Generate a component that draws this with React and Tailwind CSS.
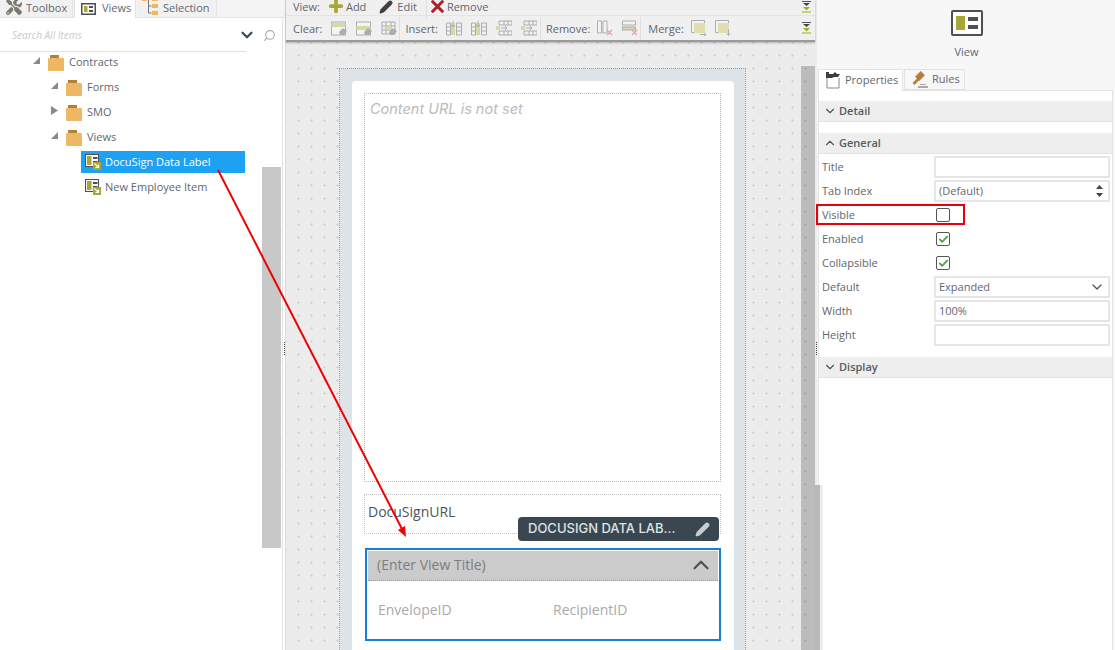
import { ChevronDown, ChevronUp, Search, Pencil, Check, X, Plus } from 'lucide-react';
import { FaTools } from 'react-icons/fa';

const Folder = () => (
  <svg width="16" height="16" viewBox="0 0 16 16" className="shrink-0">
    <rect x="2" y="0" width="9" height="3" fill="#b77f33" />
    <rect x="0" y="3" width="16" height="13" rx="1" fill="#edb766" />
  </svg>
);

const ViewIcon = ({ invert }) => (
  <svg width="16" height="16" viewBox="0 0 16 16" className="shrink-0">
    <rect x="0.5" y="0.5" width="13" height="12" fill={invert ? '#fff' : '#f4f4f4'} stroke="#4b5154" />
    <rect x="2" y="2" width="4.5" height="9" fill="#a9a635" />
    <rect x="8" y="3" width="4.5" height="2" fill="#4b5154" />
    <rect x="8" y="7" width="4.5" height="2" fill="#4b5154" />
    <rect x="8" y="8" width="8" height="8" fill="#a9a635" />
    <path d="M9.5 9.5l4 4M13.5 10.5v3h-3" stroke="#fff" strokeWidth="1.2" fill="none" />
  </svg>
);

const TreeRow = ({ pad, arrow, children }) => (
  <div className="flex items-center h-[25px]" style={{ paddingLeft: pad }}>
    <span className="w-[15px] shrink-0 flex">{arrow}</span>
    <Folder />
    <span className="ml-[5px] text-[11px] text-[#5f6670]">{children}</span>
  </div>
);

const Open = () => (
  <svg width="7" height="7" viewBox="0 0 7 7" className="-mt-[5px]"><path d="M7 0v7H0z" fill="#8a8a8a" /></svg>
);
const Closed = () => (
  <svg width="7" height="9" viewBox="0 0 7 9" className="-mt-[4px]"><path d="M0 0l7 4.5L0 9z" fill="#8a8a8a" /></svg>
);

// faded toolbar glyphs
const ToolIcon = ({ kind }) => {
  const g = '#a9aeb0';
  const y = '#d9d7a6';
  return (
    <svg width="16" height="16" viewBox="0 0 16 16" className="shrink-0">
      {kind === 'clear' && (
        <>
          <rect x="0.5" y="2" width="14" height="13" fill="#f4f4f4" stroke={g} />
          <rect x="0.5" y="3" width="14" height="4" fill={y} />
          <path d="M8 12l4-4 4 3-3 4H9z" fill={g} />
        </>
      )}
      {kind === 'clear2' && (
        <>
          <rect x="0.5" y="2" width="14" height="13" fill="#f4f4f4" stroke={g} />
          <rect x="0.5" y="6" width="14" height="4" fill={y} />
          <path d="M8 12l4-4 4 3-3 4H9z" fill={g} />
        </>
      )}
      {kind === 'clear3' && (
        <>
          <path d="M1 2h13v12H1zM1 6h13M1 10h13M5 2v12M10 2v12" fill="none" stroke={g} />
          <rect x="5" y="6" width="5" height="4" fill={y} />
          <path d="M8 12l4-4 4 3-3 4H9z" fill={g} />
        </>
      )}
      {kind === 'col' && (
        <>
          <path d="M0.5 3h4v12h-4zM10.5 3h5v12h-5zM10.5 7h5M10.5 11h5M0.5 7h4M0.5 11h4" fill="none" stroke={g} />
          <rect x="5" y="3" width="4" height="12" fill={y} />
          <path d="M7 1v6M5 5l2 2 2-2" fill="none" stroke={g} />
        </>
      )}
      {kind === 'row' && (
        <>
          <path d="M3 1h13v4H3zM3 11h13v4H3zM8 1v4M12 1v4M8 11v4M12 11v4" fill="none" stroke={g} />
          <rect x="0" y="6" width="4" height="4" fill={y} />
          <path d="M5 8h6M9 6l2 2-2 2" fill="none" stroke={g} />
        </>
      )}
      {kind === 'rmcol' && (
        <>
          <path d="M0.5 1h4v12h-4zM6 1h4v12H6z" fill="#f4f4f4" stroke={g} />
          <path d="M10 10l5 5M15 10l-5 5" stroke="#e5a5a5" strokeWidth="1.4" />
        </>
      )}
      {kind === 'rmrow' && (
        <>
          <path d="M0.5 1h13v4H0.5z" fill="#f4f4f4" stroke={g} />
          <rect x="0.5" y="7" width="13" height="3" fill={y} stroke={g} />
          <path d="M10 10l5 5M15 10l-5 5" stroke="#e5a5a5" strokeWidth="1.4" />
        </>
      )}
      {kind === 'merge' && (
        <>
          <path d="M0.5 0.5h13v12h-13z" fill="#f4f4f4" stroke={g} />
          <rect x="3" y="3" width="11" height="10" fill="#e0deb0" />
          <path d="M9 14.500h6M13 12.500l2 2-2 1.500" fill="none" stroke={g} />
        </>
      )}
      {kind === 'merge2' && (
        <>
          <path d="M0.5 0.5h13v12h-13z" fill="#f4f4f4" stroke={g} />
          <rect x="3" y="3" width="11" height="10" fill="#e0deb0" />
          <path d="M13.500 9v6.500M11.500 13.500l2 2 2-2" fill="none" stroke={g} />
        </>
      )}
    </svg>
  );
};

const Collapse = () => (
  <svg width="9" height="12" viewBox="0 0 9 12">
    <path d="M0 .5h9" stroke="#555" />
    <path d="M1 2h7L4.500 5z" fill="#444" />
    <path d="M1 6h7L4.500 9.500z" fill="#8cb71e" />
    <path d="M0 11h9" stroke="#8cb71e" />
  </svg>
);

const Sep = ({ className = '' }) => <span className={`w-px h-[23px] bg-[#dedede] shrink-0 ${className}`} />;

const Label = ({ className = '', children }) => (
  <span className={`text-[11px] leading-none text-[#5f6670] ${className}`}>{children}</span>
);

const Header = ({ up, children }) => (
  <div className="flex items-center h-[21px] bg-[#eeeeee] border-b border-[#e3e3e3] pl-[4px] gap-[2px] text-[11px] font-semibold text-[#555c62]">
    {up ? <ChevronUp size={14} strokeWidth={2} color="#555" /> : <ChevronDown size={14} strokeWidth={2} color="#555" />}
    {children}
  </div>
);

const Row = ({ label, children }) => (
  <div className="flex items-center h-[24px] pl-[3px] pr-[2px]">
    <span className="w-[112px] text-[11px] text-[#5f6670]">{label}</span>
    {children}
  </div>
);

const Input = ({ children }) => (
  <div className="w-[176px] h-[22px] border-2 border-[#e6e6e6] bg-white flex items-center justify-between px-[3px] text-[11px] text-[#5f6670]">
    {children}
  </div>
);

const Checkbox = ({ checked }) => (
  <span className="ml-[2px] w-[14px] h-[14px] border border-[#555] rounded-[2px] bg-white flex items-center justify-center">
    {checked && <Check size={11} strokeWidth={4} color="#4aa84a" />}
  </span>
);

export default function App() {
  return (
    <div className="relative w-[1115px] h-[650px] overflow-hidden flex bg-white font-['Open_Sans',sans-serif]">
      {/* left panel */}
      <div className="w-[285px] shrink-0 flex flex-col relative">
        <div className="flex h-[18px] items-center text-[11px] text-[#5f6670] bg-[#f4f4f4] border-b border-[#e3e3e3]">
          <div className="w-[73px] h-full flex items-center pl-[6px] gap-[4px] bg-[#f1f1f1] border-r border-[#e3e3e3]">
            <FaTools size={16} color="#7a7a70" className="-mt-[3px]" />
            Toolbox
          </div>
          <div className="w-[62px] h-[19px] ml-[1px] flex items-center pl-[6px] gap-[6px] bg-white border-x border-[#e3e3e3]">
            <svg width="15" height="12" viewBox="0 0 15 12" className="shrink-0">
              <rect x="0.750" y="0.750" width="13.500" height="10.500" fill="#fff" stroke="#4b5154" strokeWidth="1.500" />
              <rect x="3" y="3" width="3.500" height="6" fill="#a9a635" />
              <rect x="8" y="3" width="4" height="2" fill="#4b5154" />
              <rect x="8" y="7" width="4" height="2" fill="#4b5154" />
            </svg>
            Views
          </div>
          <div className="w-[80px] h-full ml-[1px] flex items-center pl-[5px] gap-[5px] bg-[#f1f1f1] border-r border-[#e3e3e3]">
            <svg width="16" height="18" viewBox="0 0 16 18" className="shrink-0 -mt-[6px]">
              <rect x="0" y="0" width="5" height="4" fill="#edb766" />
              <rect x="10" y="0" width="6" height="4" fill="#edb766" />
              <rect x="10" y="7" width="6" height="4" fill="#edb766" />
              <rect x="10" y="14" width="6" height="4" fill="#edb766" />
              <path d="M6.500 2v14h3M6.500 9h3" stroke="#777" fill="none" />
            </svg>
            Selection
          </div>
        </div>
        <div className="flex-1 border-r border-[#e3e3e3] mr-[2px] relative">
          <div className="h-[33px] flex items-center relative pt-[1px]">
            <span className="pl-[12px] text-[10px] italic text-[#c9c9c9]">Search All Items</span>
            <ChevronDown size={18} strokeWidth={3} color="#3f4a52" className="absolute left-[238px] top-[8px]" />
            <Search size={13} strokeWidth={2} color="#aaa" className="absolute left-[263px] top-[11px] -scale-x-100" />
          </div>
          <div className="w-[246px] h-px bg-[#e3e3e3]" />
          <div className="-mt-[2px]">
            <TreeRow pad={33} arrow={<Open />}>Contracts</TreeRow>
            <TreeRow pad={51} arrow={<Open />}>Forms</TreeRow>
            <TreeRow pad={51} arrow={<Closed />}>SMO</TreeRow>
            <TreeRow pad={51} arrow={<Open />}>Views</TreeRow>
            <div className="ml-[81px] w-[164px] h-[22px] mt-[1px] mb-[3px] flex items-center pl-[4px] gap-[4px] bg-[#1da1f2] text-[11px] text-white">
              <ViewIcon invert />
              DocuSign Data Label
            </div>
            <div className="ml-[81px] w-[164px] h-[22px] flex items-center pl-[4px] gap-[4px] text-[11px] text-[#5f6670]">
              <ViewIcon />
              New Employee Item
            </div>
          </div>
          {/* scrollbar */}
          <div className="absolute left-[262px] top-[149px] w-[19px] h-[381px] bg-[#c8c8c8]" />
        </div>
        <div className="absolute right-0 top-[342px] h-[13px] border-r border-dotted border-[#444]" />
      </div>

      {/* designer */}
      <div className="w-[530px] shrink-0 flex flex-col relative border-l border-[#dcdcdc]">
        <div className="h-[42px] shrink-0 bg-[#f0f0f0] border-b-2 border-[#9a9a9a] shadow-[0_1px_2px_rgba(0,0,0,0.25)] z-10 relative">
          <div className="h-[18px] -mt-[2px] flex items-center pl-[7px] border-b border-[#e4e4e4]">
            <Label>View:</Label>
            <Plus size={18} strokeWidth={5} color="#a9a635" className="ml-[7px] -mt-[1px]" />
            <Label className="ml-[1px]">Add</Label>
            <Pencil size={14} color="#3f3f3f" fill="#3f3f3f" className="ml-[13px]" />
            <Label className="ml-[4px] mr-[9px]">Edit</Label>
            <Sep />
            <X size={19} strokeWidth={4} color="#b3202c" className="ml-[1px]" />
            <Label>Remove</Label>
            <span className="ml-auto mr-[4px] flex"><Collapse /></span>
          </div>
          <div className="h-[24px] flex items-center pl-[7px]">
            <Label>Clear:</Label>
            <span className="ml-[9px] flex gap-[9px]">
              <ToolIcon kind="clear" />
              <ToolIcon kind="clear2" />
              <ToolIcon kind="clear3" />
            </span>
            <Sep className="ml-[2px] mr-[5px]" />
            <Label>Insert:</Label>
            <span className="ml-[8px] flex gap-[9px] mr-[3px]">
              <ToolIcon kind="col" />
              <ToolIcon kind="col" />
              <ToolIcon kind="row" />
              <ToolIcon kind="row" />
            </span>
            <Sep />
            <Label className="ml-[5px]">Remove:</Label>
            <span className="ml-[7px] flex gap-[9px]">
              <ToolIcon kind="rmcol" />
              <ToolIcon kind="rmrow" />
            </span>
            <Sep className="ml-[2px] mr-[7px]" />
            <Label>Merge:</Label>
            <span className="ml-[7px] flex gap-[8px]">
              <ToolIcon kind="merge" />
              <ToolIcon kind="merge2" />
            </span>
            <span className="ml-auto mr-[4px] flex"><Collapse /></span>
          </div>
        </div>
        <div className="flex-1 relative overflow-hidden bg-[#ececec] bg-[radial-gradient(#d6d6d6_1px,transparent_1.200px)] bg-[size:13px_13px] bg-[position:6px_7px] pl-[53px] pt-[26px]">
          {/* page */}
          <div className="w-[407px] border border-dotted border-[#9aa3a8] bg-[#dde3e6] pl-[12px] pt-[12px]">
            <div className="w-[382px] bg-white rounded-[4px] pl-[12px] pt-[12px] pb-[20px]">
              <div className="w-[357px] h-[389px] border border-dotted border-[#b5b5b5] pl-[5px] pt-[4px] italic text-[14.500px] text-[#bbbbbb] font-['Inter',sans-serif]">
                Content URL is not set
              </div>
              <div className="w-[357px] h-[40px] mt-[12px] border border-dotted border-[#c4c4c4] flex items-center pl-[3px] pb-[5px] text-[14px] text-[#4b5560]">
                DocuSignURL
              </div>
              <div className="w-[356px] h-[93px] mt-[14px] ml-[1px] border-2 border-[#1a7fd0] p-[1px]">
                <div className="h-[30px] bg-[#cbcbcb] border-b border-dotted border-[#9a9a9a] flex items-center justify-between pl-[9px] pr-[4px] pb-[2px] text-[14px] text-[#7d7d7d]">
                  (Enter View Title)
                  <ChevronUp size={26} strokeWidth={2} color="#4f4f4f" />
                </div>
                <div className="flex pl-[10px] pt-[18px] text-[14px] text-[#a9a9a9]">
                  <span className="w-[175px]">EnvelopeID</span>
                  <span>RecipientID</span>
                </div>
              </div>
            </div>
          </div>
          {/* scrollbar */}
          <div className="absolute right-0 top-[24px] bottom-0 w-[14px] bg-black/20" />
          {/* control tag */}
          <div className="absolute left-[232px] top-[475px] w-[201px] h-[24px] rounded-[4px] bg-[#3a4750] flex items-center justify-between pl-[10px] pr-[9px] text-[13px] font-medium text-[#dfe3e6] font-['Inter',sans-serif]">
            DOCUSIGN DATA LAB...
            <Pencil size={15} color="#c9cdd0" fill="#c9cdd0" />
          </div>
        </div>
        <div className="absolute left-[529px] top-[485px] bottom-0 w-[8px] bg-[#b8b8b8] border-r-[3px] border-[#eeeeee] z-10" />
      </div>

      {/* properties */}
      <div className="flex-1 flex flex-col bg-[#f7f7f7] border-l-2 border-[#ececec] relative">
        <div className="h-[69px] flex flex-col items-center pt-[10px]">
          <svg width="32" height="26" viewBox="0 0 32 26">
            <rect x="1" y="1" width="30" height="24" rx="1" fill="#fff" stroke="#4b5154" strokeWidth="2" />
            <rect x="5" y="6" width="9" height="14" fill="#a9a635" />
            <rect x="17" y="7" width="10" height="4" fill="#4b5154" />
            <rect x="17" y="15" width="10" height="4" fill="#4b5154" />
          </svg>
          <span className="mt-[8px] text-[11px] text-[#5f6670]">View</span>
        </div>
        <div className="flex h-[21px] ml-[1px] items-end text-[11px] text-[#5f6670]">
          <div className="w-[85px] h-[22px] flex items-center pl-[6px] gap-[4px] bg-white border-x border-t border-[#e3e3e3] -mb-px z-10 relative">
            <svg width="16" height="18" viewBox="0 0 16 18" className="shrink-0 -mt-[2px]">
              <path d="M2 4v13h12V7" fill="none" stroke="#888" />
              <path d="M1 1h3v2h4l2-2 2 2h3l-2 3H9L7 7H1z" fill="#3d3d3d" />
            </svg>
            Properties
          </div>
          <div className="w-[61px] h-[21px] ml-[1px] flex items-center pl-[7px] gap-[4px] border border-[#e3e3e3]">
            <svg width="16" height="17" viewBox="0 0 16 17" className="shrink-0">
              <rect x="5" y="1" width="6" height="8" transform="rotate(45 8 5)" fill="#b77f33" />
              <path d="M5.500 7l2 2-5 5-2-2z" fill="#b77f33" />
              <path d="M8 13h6v1H8zM6 15h10v2H6z" fill="#a9a9a9" />
            </svg>
            Rules
          </div>
        </div>
        <div className="flex-1 ml-[1px] mr-[3px] bg-white border-l border-r border-t border-[#e3e3e3]">
          <div className="h-[10px]" />
          <Header>Detail</Header>
          <div className="h-[11px]" />
          <Header up>General</Header>
          <div className="h-[1px]" />
          <Row label="Title"><Input /></Row>
          <Row label="Tab Index">
            <Input>
              (Default)
              <svg width="9" height="14" viewBox="0 0 9 14" className="mr-[1px]">
                <path d="M4.500 1L8 5H1zM4.500 13L1 9h7z" fill="#444" />
              </svg>
            </Input>
          </Row>
          <Row label="Visible"><Checkbox /></Row>
          <Row label="Enabled"><Checkbox checked /></Row>
          <Row label="Collapsible"><Checkbox checked /></Row>
          <Row label="Default">
            <Input>
              Expanded
              <ChevronDown size={16} strokeWidth={2} color="#555" />
            </Input>
          </Row>
          <Row label="Width"><Input>100%</Input></Row>
          <Row label="Height"><Input /></Row>
          <div className="h-[10px]" />
          <Header>Display</Header>
        </div>
        <div className="absolute -left-[1px] top-[342px] h-[13px] border-l border-dotted border-[#444]" />
        <div className="absolute -left-[1px] top-[204px] w-[149px] h-[21px] border-2 border-[#e8000d] z-10" />
      </div>

      {/* annotation arrow */}
      <svg className="absolute inset-0 pointer-events-none z-20" width="1115" height="650" viewBox="0 0 1115 650">
        <path d="M218 170L403 531" stroke="#f00000" strokeWidth="2" />
        <path d="M406 537L398 530L405 526z" fill="#f00000" />
      </svg>
    </div>
  );
}
